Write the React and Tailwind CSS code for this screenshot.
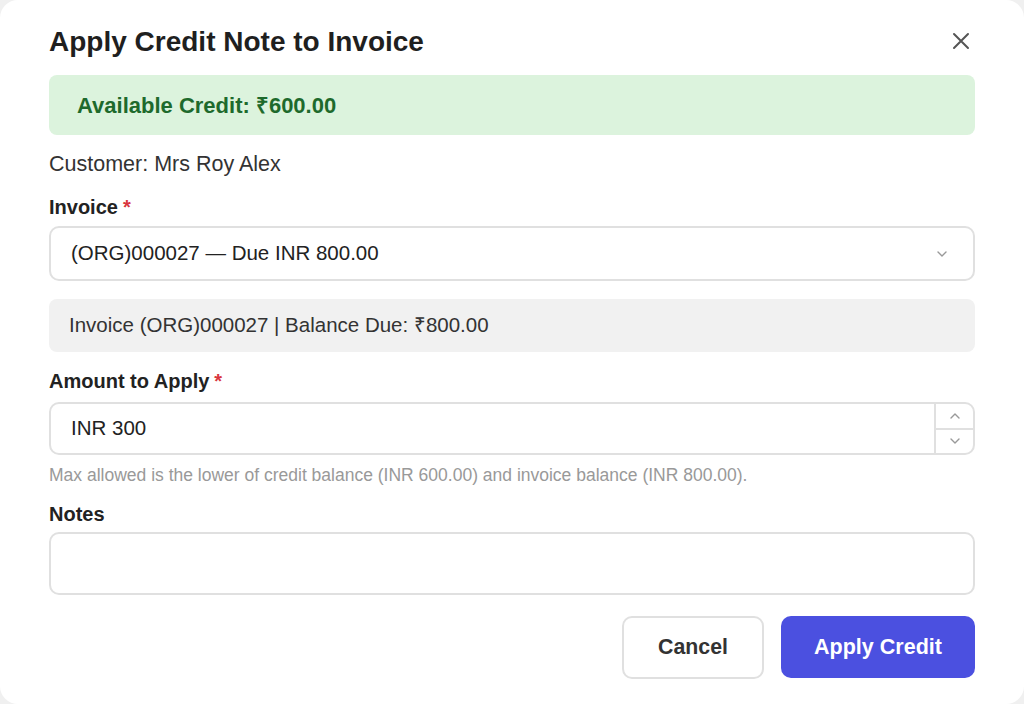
import React from "react";

const font = { fontFamily: '"Liberation Sans", Arial, sans-serif' };

const Label = ({ children, required, className = "" }) => (
  <div className={`text-[20px] leading-[26px] font-bold text-[#222] ${className}`}>
    {children}
    {required && <span className="text-[#d9363e] ml-[5px]">*</span>}
  </div>
);

const App = () => {
  return (
    <div className="w-[1024px] h-[704px] bg-[#f0f0f0]" style={font}>
      <div className="w-full h-full bg-white rounded-[18px] px-[49px] pt-[24px] flex flex-col">
        {/* header */}
        <div className="flex items-center justify-between">
          <h2 className="text-[28px] leading-[36px] font-bold text-[#1f1f1f]">
            Apply Credit Note to Invoice
          </h2>
          <button className="w-[24px] h-[24px] flex items-center justify-center mr-[2px] -mt-[2px]">
            <svg width="18" height="18" viewBox="0 0 18 18" fill="none" stroke="#555" strokeWidth="2" strokeLinecap="round">
              <path d="M2 2L16 16M16 2L2 16" />
            </svg>
          </button>
        </div>

        <div className="mt-[15px] h-[60px] rounded-lg bg-[#dcf3dd] px-[28px] flex items-center">
          <span className="text-[22px] font-bold text-[#1e6a2c]">Available Credit: ₹600.00</span>
        </div>

        <div className="mt-[15px] text-[21.5px] leading-[28px] text-[#333]">Customer: Mrs Roy Alex</div>

        <Label required className="mt-[16px]">Invoice</Label>
        <div className="mt-[6px] h-[55px] border-2 border-[#e0e0e0] rounded-[10px] pl-[20px] pr-[26px] flex items-center justify-between">
          <span className="text-[20.5px] text-[#222]">(ORG)000027 — Due INR 800.00</span>
          <svg width="10" height="6" viewBox="0 0 10 6" fill="none" stroke="#999" strokeWidth="1.4" strokeLinecap="round" strokeLinejoin="round">
            <path d="M1 1L5 5L9 1" />
          </svg>
        </div>

        <div className="mt-[18px] h-[53px] rounded-lg bg-[#f1f1f1] px-[20px] flex items-center">
          <span className="text-[20.5px] text-[#333]">Invoice (ORG)000027 | Balance Due: ₹800.00</span>
        </div>

        <Label required className="mt-[16px]">Amount to Apply</Label>
        <div className="mt-[8px] h-[53px] border-2 border-[#e0e0e0] rounded-[10px] flex overflow-hidden">
          <div className="flex-1 pl-[20px] flex items-center">
            <span className="text-[20.5px] text-[#222]">INR 300</span>
          </div>
          <div className="w-[39px] border-l-2 border-[#e0e0e0] flex flex-col">
            <div className="flex-1 flex items-center justify-center border-b-2 border-[#e0e0e0]">
              <svg width="10" height="6" viewBox="0 0 10 6" fill="none" stroke="#999" strokeWidth="1.4" strokeLinecap="round" strokeLinejoin="round">
                <path d="M1 5L5 1L9 5" />
              </svg>
            </div>
            <div className="flex-1 flex items-center justify-center">
              <svg width="10" height="6" viewBox="0 0 10 6" fill="none" stroke="#999" strokeWidth="1.4" strokeLinecap="round" strokeLinejoin="round">
                <path d="M1 1L5 5L9 1" />
              </svg>
            </div>
          </div>
        </div>

        <div className="mt-[10px] text-[17.5px] leading-[20px] text-[#999]">
          Max allowed is the lower of credit balance (INR 600.00) and invoice balance (INR 800.00).
        </div>

        <Label className="mt-[16px]">Notes</Label>
        <div className="mt-[5px] h-[63px] border-2 border-[#e0e0e0] rounded-[10px]" />

        <div className="mt-[21px] flex justify-end gap-[17px]">
          <button className="w-[142px] h-[63px] border-2 border-[#e0e0e0] rounded-[10px] bg-white text-[21.3px] font-bold text-[#333]">
            Cancel
          </button>
          <button className="w-[194px] h-[62px] rounded-[10px] bg-[#4b50e0] text-[21.5px] font-bold text-white">
            Apply Credit
          </button>
        </div>
      </div>
    </div>
  );
};

export default App;
